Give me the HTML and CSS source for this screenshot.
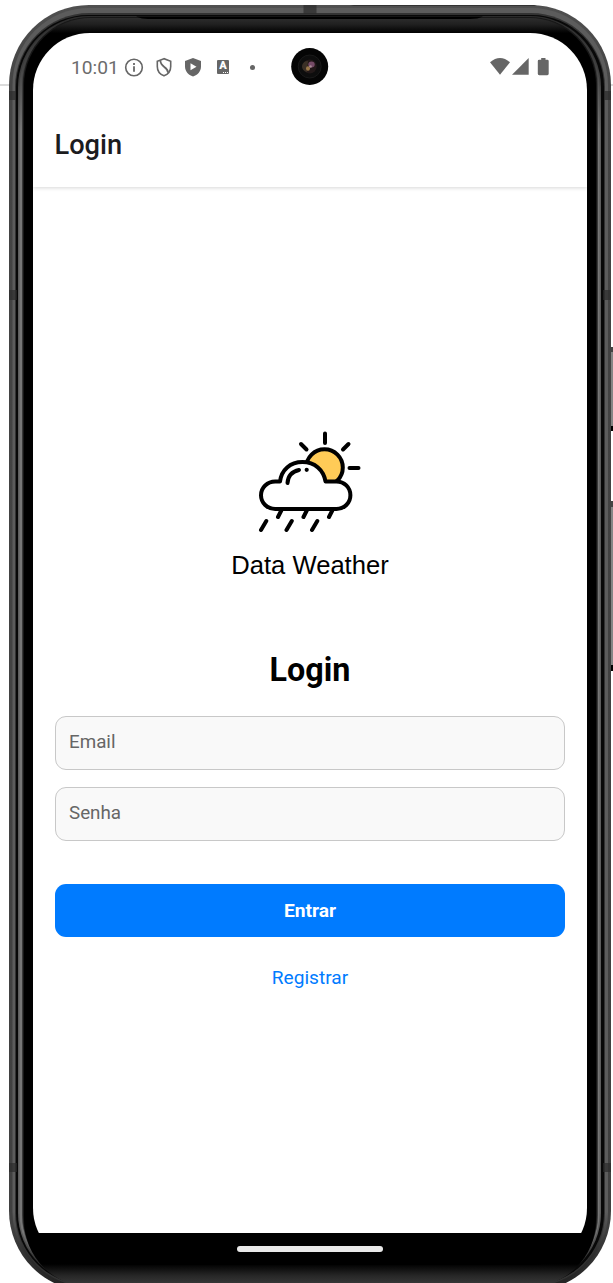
FILE: index.html
```html
<!DOCTYPE html>
<html lang="pt">
<head>
<meta charset="utf-8">
<title>Data Weather</title>
<link rel="stylesheet" href="styles.css">
</head>
<body>
<div class="stage">
  <svg class="frame" width="613" height="1283" viewBox="0 0 613 1283" aria-hidden="true">
    <defs>
      <linearGradient id="rim" x1="0" y1="0" x2="0" y2="1"><stop offset="0" stop-color="#505050"/><stop offset=".06" stop-color="#444"/><stop offset=".95" stop-color="#404040"/><stop offset="1" stop-color="#222"/></linearGradient>
      <linearGradient id="band" x1="0" y1="0" x2="0" y2="1"><stop offset="0" stop-color="#5c5c5c"/><stop offset=".06" stop-color="#5c5c5c"/><stop offset=".94" stop-color="#5c5c5c"/><stop offset=".97" stop-color="#303030"/><stop offset="1" stop-color="#222"/></linearGradient>
      <linearGradient id="inner" x1="0" y1="0" x2="0" y2="1"><stop offset="0" stop-color="#2c2c2c"/><stop offset=".05" stop-color="#404040"/><stop offset=".09" stop-color="#5c5c5c"/><stop offset=".96" stop-color="#5c5c5c"/><stop offset=".985" stop-color="#2c2c2c"/></linearGradient>
      <linearGradient id="shine" x1="0" y1="0" x2="0" y2="1"><stop offset="0" stop-color="#303030"/><stop offset=".04" stop-color="#444"/><stop offset=".09" stop-color="#777"/><stop offset=".96" stop-color="#777"/><stop offset=".985" stop-color="#303030"/></linearGradient>
      <linearGradient id="bezel" gradientUnits="userSpaceOnUse" x1="0" y1="18" x2="0" y2="1283"><stop offset="0" stop-color="#2d2d2d"/><stop offset=".005" stop-color="#202020"/><stop offset=".012" stop-color="#000"/><stop offset=".985" stop-color="#000"/><stop offset=".994" stop-color="#262626"/><stop offset="1" stop-color="#363636"/></linearGradient>
    </defs>
    <path d="M0 85H10M610 85H613" stroke="#cfcfcf" stroke-width="1.5"/>
    <path d="M610 347h3v84h-3zM610 501h3v170h-3z" fill="#858585"/>
    <path d="M610 347h3v5h-3zM610 501h3v6h-3z" fill="#444"/>
    <path d="M610 426h3v5h-3zM610 665h3v6h-3z" fill="#000"/>
    <rect x="9" y="5" width="602" height="1286" rx="80" fill="url(#rim)"/>
    <rect x="12.500" y="8" width="595.500" height="1281" rx="77" fill="url(#band)"/>
    <rect x="15" y="13" width="590" height="1274" rx="74" fill="#333"/>
    <rect x="16" y="15" width="588" height="1270" rx="72" fill="#080808"/>
    <rect x="18" y="16" width="583" height="1268" rx="71" fill="url(#inner)"/>
    <rect x="19.500" y="17" width="580" height="1266" rx="70" fill="url(#shine)"/>
    <rect x="22" y="17" width="576" height="1266" rx="68" fill="#3a3a3a"/>
    <rect x="23" y="17" width="574" height="1266" rx="67" fill="#181818"/>
    <rect x="24" y="18" width="572" height="1269" rx="67" fill="url(#bezel)"/>
    <path d="M136 16.500q6 2.500 12 2.500H470q8 0 13-2.500z" fill="#000"/>
    <path d="M303.500 5h13v9h-13zM9 91h7v9H9zM604 91h7v9h-7zM9 290h8v10H9zM603 290h8v10h-8zM9 1163h8v9H9zM603 1163h8v9h-8z" fill="#2b2b2b" opacity=".7"/>
    <path d="M350 5h184l3 1H354z" fill="#333"/>
  </svg>

  <main class="screen">
    <div class="status">
      <div class="status-left">
        <span class="clock">10:01</span>
        <svg class="ic-info" width="20" height="20" viewBox="0 0 20 20"><circle cx="10" cy="10.500" r="8.300" fill="none" stroke="#666" stroke-width="1.600"/><path d="M9.100 9.300h1.800v5.500H9.100zM9.100 6h1.800v1.900H9.100z" fill="#666"/></svg>
        <svg class="ic-shield" width="16" height="20" viewBox="0 0 16 20"><path d="M8 1.700 1.300 4.200V9.500c0 4.200 2.600 7.800 6.700 9.300 4.100-1.500 6.700-5.100 6.700-9.300V4.200z" fill="none" stroke="#666" stroke-width="1.600"/><path d="M4.300 3.300c.1 3 1.200 4.600 4 6.600 2.800 2 3.900 3.700 3.800 6" fill="none" stroke="#666" stroke-width="1.800"/></svg>
        <svg class="ic-play" width="16" height="20" viewBox="0 0 16 20"><path d="M8 1 0 4V9.500c0 4.800 3.200 8.400 8 10 4.800-1.600 8-5.200 8-10V4z" fill="#666"/><path d="M5.500 6.300 11.500 9.800 5.500 13.300z" fill="#fff"/></svg>
        <span class="ic-letter"><span>A</span><i></i></span>
        <span class="ic-dot"></span>
      </div>
      <svg class="camera" width="38" height="38" viewBox="0 0 38 38">
        <circle cx="18.700" cy="18.500" r="18.500" fill="#050505"/>
        <circle cx="18.700" cy="18.500" r="11.500" fill="#0d0d0d" stroke="#191919"/>
        <circle cx="18.700" cy="18.500" r="7" fill="#221818"/>
        <path d="M17 13a5.500 5.500 0 0 0-1 11z" fill="#3b3026"/>
        <ellipse cx="20.500" cy="16.500" rx="3.200" ry="3" fill="#754a66"/>
        <ellipse cx="17" cy="20.500" rx="2" ry="2.300" fill="#9a7748"/>
        <circle cx="19.500" cy="18.500" r="1.300" fill="#a98b95"/>
      </svg>
      <svg class="signals" width="60" height="20" viewBox="0 0 60 20" fill="#666">
        <path d="M0 5.300Q10-3.200 20 5.300L10 17.700z"/>
        <path d="M22 17.700 38.700 1v16.700z"/>
        <path d="M51.200 1h4.300v1.700h1.800q1.400 0 1.400 1.400v12.700q0 1.400-1.400 1.400h-8.100q-1.400 0-1.400-1.400V4.100q0-1.400 1.400-1.400h2z"/>
      </svg>
    </div>
    <header class="appbar">Login</header>
    <section class="content">
      <svg class="logo" width="104" height="104" viewBox="1 0.500 104 104" fill="none" stroke="#000" stroke-width="4" stroke-linecap="round" stroke-linejoin="round">
        <circle cx="67.500" cy="38" r="18.300" fill="#ffcb57"/>
        <path d="M68 4v9.500M44 14.500l5.500 5.500M91.500 14.500l-5.500 5.500M92.500 38.500h9"/>
        <path d="M18.200 79.500a14.200 13.800 0 0 1 0-27.600H23C24.500 40.500 33 32.500 45.500 32.500c12.500 0 21 8 23 19.400H79.500a13.900 13.800 0 0 1 0 27.600z" fill="#fff"/>
        <path d="M30.500 53.500c.5-7 4.500-11.500 11.500-13"/>
        <circle cx="49.700" cy="40.300" r="2.100" fill="#000" stroke="none"/>
        <path d="M24.300 81l-3.300 6.500M49.800 81l-3.300 6.500M75.300 81l-3.300 6.500M9.300 91.500l-5.300 9M34.800 91.500l-5.300 9M60.300 91.500l-5.300 9"/>
      </svg>
      <div class="brand">Data Weather</div>
      <h1 class="title">Login</h1>
      <div class="field">Email</div>
      <div class="field">Senha</div>
      <div class="button">Entrar</div>
      <div class="link">Registrar</div>
    </section>
    <div class="navbar"><span class="handle"></span></div>
  </main>
</div>
</body>
</html>
```
FILE: styles.css
```css
* { box-sizing: border-box; }
body { margin: 0; background: #fff; font-family: Roboto, sans-serif; }
.stage { position: relative; width: 613px; height: 1283px; overflow: hidden; padding: 33px 26px 0 33px; }
.frame { position: absolute; left: 0; top: 0; }
.screen { position: relative; width: 554px; height: 1232px; border-radius: 57px; overflow: hidden; display: flex; flex-direction: column; }
.status { position: relative; z-index: 1; background: #fff; height: 70px; flex: none; display: grid; grid-template-columns: 258px 38px 1fr; padding-bottom: 2px; align-items: center; }
.status-left { display: flex; align-items: center; padding-left: 38px; }
.clock { font-size: 19.2px; line-height: 24px; color: #6c6c6c; width: 53px; white-space: nowrap; padding-top: 1px; }
.status-left svg { flex: none; }
.ic-shield { margin-left: 12px; }
.ic-play { margin-left: 13px; }
.ic-letter { margin-left: 16px; width: 12px; height: 14px; flex: none; background: #666; border-radius: 1px; color: #fff; font-size: 11px; font-weight: 900; line-height: 12px; text-align: center; display: flex; flex-direction: column; align-items: center; }
.ic-letter i { width: 6px; height: 1px; margin-left: 5px; background: repeating-linear-gradient(90deg, #fff 0 1px, #666 1px 2px); }
.ic-dot { margin-left: 21px; width: 5px; height: 5px; flex: none; border-radius: 50%; background: #666; }
.signals { justify-self: end; margin-right: 37px; }
.appbar { position: relative; background: #fff; height: 84px; flex: none; padding: 26px 21.5px 0; font-size: 27.2px; font-weight: 500; line-height: 32px; color: #1c1c1e; box-shadow: 0 1px 4px rgba(0, 0, 0, .16); }
.content { flex: 1; background: #fff; display: flex; flex-direction: column; align-items: center; padding: 243px 22px 0; }
.logo { flex: none; }
.brand { margin-top: 15px; font-family: "Liberation Sans", Arial, sans-serif; font-size: 25.6px; line-height: 32px; color: #000; }
.title { margin: 70px 0 0; font-size: 32.3px; font-weight: 700; line-height: 38px; color: #000; }
.field { width: 510px; height: 54px; flex: none; border: 1px solid #c8c8c8; border-radius: 11px; background: #f9f9f9; color: #666; font-size: 18.8px; line-height: 51px; padding: 0 13px; margin-top: 17px; }
.title + .field { margin-top: 27px; }
.button { width: 510px; height: 53px; flex: none; margin-top: 43px; border-radius: 11px; background: #007bff; color: #fff; font-size: 19.2px; font-weight: 700; line-height: 54px; text-align: center; }
.link { margin-top: 28px; color: #007bff; font-size: 19.1px; line-height: 26px; }
.navbar { flex: none; height: 32px; background: #000; display: flex; justify-content: center; padding-top: 13px; }
.handle { width: 146px; height: 6px; border-radius: 3px; background: #e9e9e9; }
```
